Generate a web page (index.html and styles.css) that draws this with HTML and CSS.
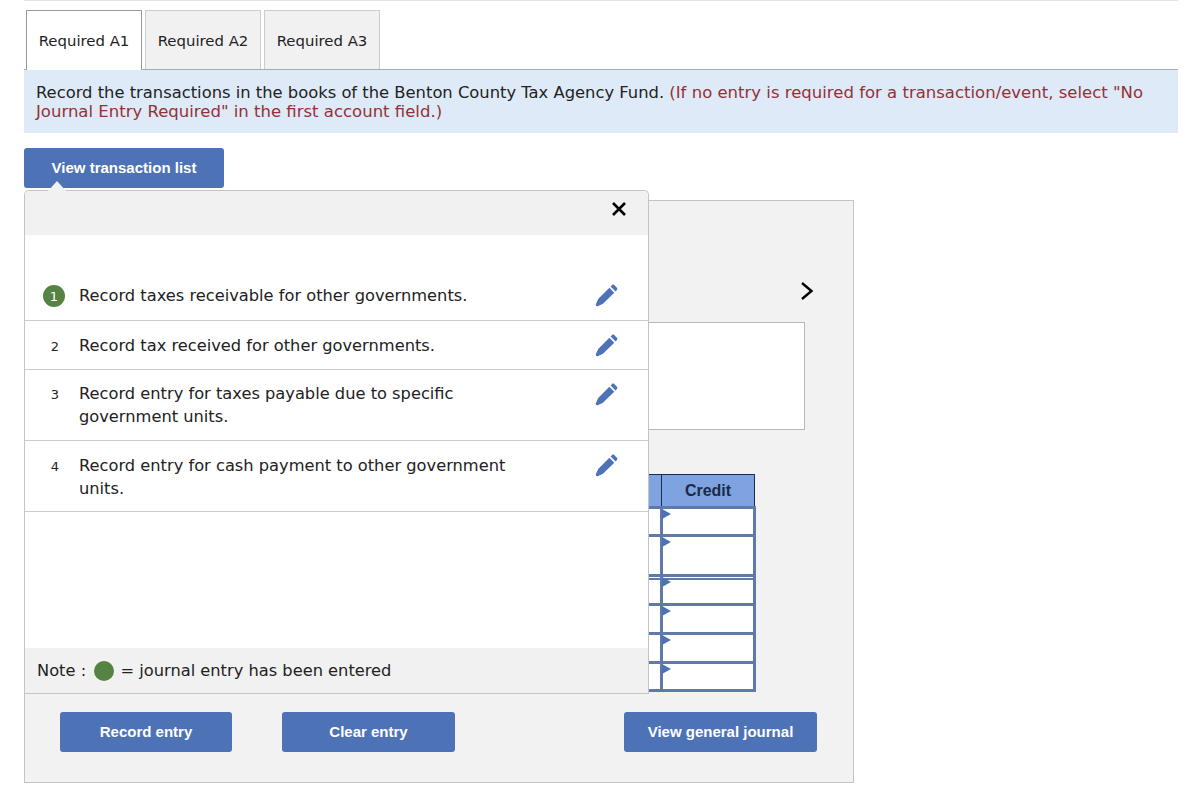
FILE: index.html
```html
<!DOCTYPE html>
<html lang="en">
<head>
  <meta charset="UTF-8" />
  <title>Required A1</title>
  <link rel="stylesheet" href="styles.css">
</head>
<body>
  <div class="page">
    <div class="tabs">
      <div class="tab active">Required A1</div>
      <div class="tab">Required A2</div>
      <div class="tab">Required A3</div>
    </div>
    <div class="instructions">
      Record the transactions in the books of the Benton County Tax Agency Fund.
      <span class="hint">(If no entry is required for a transaction/event, select "No Journal Entry Required" in the first account field.)</span>
    </div>
    <button class="btn btn-list">View transaction list</button>

    <div class="workspace">
      <div class="panel">
        <div class="pager">
          <svg width="14" height="20" viewBox="0 0 14 20"><path d="M2 2l9.500 8L2 18" fill="none" stroke="#000" stroke-width="2.400"/></svg>
        </div>
        <div class="entry-box"></div>
        <table class="journal">
          <tr><th class="col-account"></th><th class="col-debit"></th><th class="col-credit">Credit</th></tr>
          <tr class="r1"><td></td><td></td><td class="cell"></td></tr>
          <tr class="r2"><td></td><td></td><td class="cell"></td></tr>
          <tr class="r3"><td></td><td></td><td class="cell"></td></tr>
          <tr class="r4"><td></td><td></td><td class="cell"></td></tr>
          <tr class="r5"><td></td><td></td><td class="cell"></td></tr>
          <tr class="r6"><td></td><td></td><td class="cell"></td></tr>
        </table>
        <div class="actions">
          <button class="btn btn-record">Record entry</button>
          <button class="btn btn-clear">Clear entry</button>
          <button class="btn btn-journal">View general journal</button>
        </div>
      </div>

      <div class="popover">
        <div class="popover-head">
          <svg width="16" height="16" viewBox="0 0 16 16"><path d="M2 2l12 12M14 2L2 14" fill="none" stroke="#000" stroke-width="2.600"/></svg>
        </div>
        <ul class="tx-list">
          <li class="tx tx-first">
            <span class="num done">1</span>
            <span class="tx-text">Record taxes receivable for other governments.</span>
            <svg class="pencil" viewBox="0 0 24 24"><path d="M1.200 22.800c-.5-.4-.5-1-.3-1.600l2.400-5.500L15 3.900l5.100 5.100L8.300 20.700l-5.500 2.400c-.6.200-1.200.1-1.600-.3zM16.300 2.600l1.500-1.500c.6-.6 1.600-.6 2.200 0l2.900 2.900c.6.600.6 1.600 0 2.200l-1.500 1.500z"/></svg>
          </li>
          <li class="tx tx-low">
            <span class="num">2</span>
            <span class="tx-text">Record tax received for other governments.</span>
            <svg class="pencil" viewBox="0 0 24 24"><path d="M1.200 22.800c-.5-.4-.5-1-.3-1.600l2.400-5.500L15 3.900l5.100 5.100L8.300 20.700l-5.500 2.400c-.6.200-1.200.1-1.600-.3zM16.300 2.600l1.500-1.500c.6-.6 1.600-.6 2.200 0l2.900 2.900c.6.600.6 1.600 0 2.200l-1.500 1.500z"/></svg>
          </li>
          <li class="tx">
            <span class="num">3</span>
            <span class="tx-text">Record entry for taxes payable due to specific government units.</span>
            <svg class="pencil" viewBox="0 0 24 24"><path d="M1.200 22.800c-.5-.4-.5-1-.3-1.600l2.400-5.500L15 3.900l5.100 5.100L8.300 20.700l-5.500 2.400c-.6.200-1.200.1-1.600-.3zM16.300 2.600l1.500-1.500c.6-.6 1.600-.6 2.200 0l2.900 2.900c.6.600.6 1.600 0 2.200l-1.500 1.500z"/></svg>
          </li>
          <li class="tx tx-low">
            <span class="num">4</span>
            <span class="tx-text">Record entry for cash payment to other government units.</span>
            <svg class="pencil" viewBox="0 0 24 24"><path d="M1.200 22.800c-.5-.4-.5-1-.3-1.600l2.400-5.500L15 3.900l5.100 5.100L8.300 20.700l-5.500 2.400c-.6.200-1.200.1-1.600-.3zM16.300 2.600l1.500-1.500c.6-.6 1.600-.6 2.200 0l2.900 2.900c.6.600.6 1.600 0 2.200l-1.500 1.500z"/></svg>
          </li>
        </ul>
        <div class="note">Note : <span class="dot"></span> = journal entry has been entered</div>
      </div>
    </div>
  </div>
</body>
</html>
```

FILE: styles.css
```css
body {
  font-family: "DejaVu Sans", Verdana, sans-serif;
  color: #222;
  background: #fff;
  margin: 0;
}
.page {
  margin: 0 15px 0 24px;
  border-top: 1px solid #e3e3e3;
  padding-top: 9px;
}
.tabs {
  display: flex;
  gap: 3px;
  padding-left: 2px;
  height: 59px;
  border-bottom: 1px solid #aaa;
}
.tab {
  width: 116px;
  box-sizing: border-box;
  height: 59px;
  border: 1px solid #ccc;
  border-bottom: none;
  background: #f1f1f1;
  font-size: 14.900px;
  line-height: 60px;
  text-align: center;
}
.tab.active {
  background: #fff;
  border-color: #999;
  height: 60px;
  position: relative;
}
.instructions {
  background: #deeaf8;
  font-size: 16.350px;
  line-height: 19px;
  padding: 13px 12px 12px;
  height: 38px;
}
.hint {
  color: #943135;
  font-size: 16.500px;
}
.btn {
  display: block;
  background: #4e72b6;
  color: #fff;
  border: none;
  border-radius: 3px;
  font-family: "Liberation Sans", Arial, sans-serif;
  font-size: 15px;
  font-weight: bold;
  height: 40px;
  padding: 0 0 2px;
}
.btn-list {
  width: 200px;
  margin-top: 15px;
}
.workspace {
  position: relative;
  margin-top: 12px;
}
.panel {
  width: 828px;
  height: 581px;
  border: 1px solid #c4c4c4;
  background: #f2f2f2;
  position: relative;
  display: flex;
  flex-direction: column;
}
.pager {
  display: flex;
  justify-content: flex-end;
  padding: 80px 39px 0 0;
  height: 19px;
}
.entry-box {
  width: 699px;
  height: 106px;
  margin: 22px 0 0 79px;
  background: #fff;
  border: 1px solid #b9b9b9;
}
.journal {
  border-collapse: collapse;
  width: 680px;
  margin: 44px 0 0 51px;
  table-layout: fixed;
}
.journal th {
  height: 31px;
  padding: 0;
  background: #7ea3e0;
  border: 1px solid #1d2c4a;
  color: #1b2a47;
  font-family: "Liberation Sans", Arial, sans-serif;
  font-size: 16px;
  font-weight: bold;
}
.col-account { width: 400px; }
.col-credit { width: 92px; }
.journal td {
  background: #fff;
  padding: 0;
  border: solid #5f79a9;
  border-width: 3px;
  position: relative;
}
.cell::before {
  content: "";
  position: absolute;
  left: -1px;
  top: 0;
  border-left: 9px solid #4e72b6;
  border-top: 5px solid transparent;
  border-bottom: 5px solid transparent;
}
.r1 td { height: 25px; }
.r2 td { height: 37px; }
.r3 td { height: 26px; box-shadow: inset 0 1px 0 #fff, inset 0 3px 0 #5f79a9; }
.r4 td { height: 26px; }
.r5 td { height: 26px; }
.r6 td { height: 25px; }
.actions {
  position: relative;
  margin-top: 20px;
  display: flex;
  padding-left: 35px;
}
.btn-record { width: 172px; }
.btn-clear { width: 173px; margin-left: 50px; }
.btn-journal { width: 193px; margin-left: 169px; }

.popover {
  position: absolute;
  left: 0;
  top: -10px;
  width: 625px;
  height: 504px;
  box-sizing: border-box;
  background: #fff;
  border: 1px solid #c4c4c4;
  border-bottom: none;
  border-radius: 5px 5px 0 0;
  display: flex;
  flex-direction: column;
}
.popover::before {
  content: "";
  position: absolute;
  left: 23px;
  top: -10px;
  border-left: 9px solid transparent;
  border-right: 9px solid transparent;
  border-bottom: 10px solid #f1f1f1;
}
.popover-head {
  height: 44px;
  box-sizing: border-box;
  background: #f1f1f1;
  border-radius: 5px 5px 0 0;
  display: flex;
  justify-content: flex-end;
  align-items: center;
  padding: 0 21px 9px 0;
  flex: none;
}
.tx-list {
  list-style: none;
  margin: 0;
  padding: 0;
  flex: 1;
}
.tx {
  display: flex;
  align-items: flex-start;
  box-sizing: border-box;
  min-height: 49px;
  border-bottom: 1px solid #ccc;
  padding: 13px 30px 12px 0;
  font-size: 16.250px;
  line-height: 22.500px;
}
.tx-low {
  padding: 14px 30px 11px 0;
}
.tx-first {
  padding: 50px 30px 11px 0;
  min-height: 86px;
}
.num {
  width: 22px;
  height: 22px;
  margin-left: 19px;
  margin-right: 13px;
  flex: none;
  font-size: 13px;
  text-align: center;
  line-height: 23px;
}
.num.done {
  margin-left: 18px;
  margin-right: 14px;
  background: #568344;
  color: #fff;
  border-radius: 50%;
}
.tx-text {
  width: 450px;
  flex: none;
}
.pencil {
  width: 23px;
  height: 23px;
  fill: #4e72b6;
  flex: none;
  margin: 0 0 -3px 66px;
}
.tx-low .pencil {
  margin-top: -1px;
}
.tx-first .pencil {
  margin-top: -1px;
}
.note {
  height: 45px;
  background: #f1f1f1;
  border-bottom: 1px solid #c4c4c4;
  font-size: 16.250px;
  line-height: 45px;
  padding-left: 12px;
  flex: none;
}
.dot {
  display: inline-block;
  width: 20px;
  height: 20px;
  border-radius: 50%;
  background: #568344;
  vertical-align: -5px;
  margin: 0 1px 0 3px;
}
```
